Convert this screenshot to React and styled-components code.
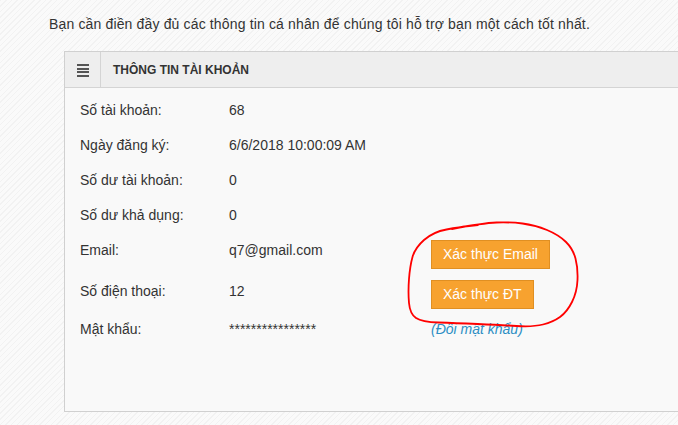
import React from "react";
import styled, { createGlobalStyle } from "styled-components";

const Global = createGlobalStyle`
  html, body {
    margin: 0;
    padding: 0;
    overflow: hidden;
  }
  body {
    font-family: "Liberation Sans", Arial, sans-serif;
    font-size: 14px;
    color: #333;
    background-color: #f7f7f7;
    background-image: repeating-linear-gradient(
      135deg,
      #f2f2f2 0px,
      #f2f2f2 1px,
      #fafafa 1px,
      #fafafa 4px
    );
  }
`;

const Page = styled.div`
  position: relative;
  width: 678px;
  height: 425px;
  padding: 15px 0 0 49px;
  box-sizing: border-box;
`;

const Intro = styled.p`
  margin: 0 0 18px 0;
  line-height: 18px;
  font-size: 14px;
  letter-spacing: 0.15px;
  color: #333;
  white-space: nowrap;
`;

const Panel = styled.section`
  margin-left: 15px;
  width: 680px;
  border: 1px solid #d0d0d0;
  background: #f9f9f9;
`;

const PanelHeader = styled.header`
  display: flex;
  align-items: stretch;
  height: 35px;
  background: #eeeeee;
  border-bottom: 1px solid #d4d4d4;
`;

const IconCell = styled.div`
  width: 35px;
  display: flex;
  align-items: center;
  justify-content: center;
  border-right: 1px solid #d4d4d4;
`;

const MenuIcon = styled.span`
  display: flex;
  flex-direction: column;
  gap: 1.4px;
  width: 12px;
  margin-left: 1px;
  margin-top: 2px;
  & > i {
    display: block;
    height: 2px;
    background: #555;
  }
`;

const Title = styled.h2`
  margin: 0;
  padding-left: 12px;
  display: flex;
  align-items: center;
  font-size: 12px;
  font-weight: bold;
  color: #333;
`;

const PanelBody = styled.div`
  height: 323px;
  padding: 4px 0 0 15px;
  box-sizing: border-box;
`;

const Row = styled.div`
  display: grid;
  grid-template-columns: 149px 202px auto;
  align-items: start;
  height: ${(p) => p.$h}px;
  padding-top: 9px;
  box-sizing: border-box;
`;

const Label = styled.span`
  line-height: 18px;
  color: #333;
`;

const Value = styled.span`
  line-height: 18px;
  color: #333;
`;

const Actions = styled.div`
  display: flex;
  margin-top: ${(p) => p.$offset || 0}px;
`;

const OrangeButton = styled.button`
  font-family: "Liberation Sans", Arial, sans-serif;
  font-size: 14px;
  line-height: 17px;
  color: #fff;
  background: #f7a22f;
  border: 1px solid #e08f22;
  padding: 5px 11px;
  border-radius: 0;
  cursor: pointer;
`;

const ChangeLink = styled.a`
  line-height: 18px;
  font-style: italic;
  color: #2d8fc4;
  text-decoration: none;
  cursor: pointer;
`;

const Annotation = styled.svg`
  position: absolute;
  left: 0;
  top: 0;
  pointer-events: none;
`;

const ringPoints = [
  [452, 229], [483, 223], [510, 222], [535, 225], [559, 235], [573, 249],
  [578, 268], [577, 292], [567, 312], [553, 322], [533, 327], [500, 325],
  [455, 323], [422, 322], [410, 314], [408, 292], [410, 266], [415, 248],
  [433, 232], [460, 227], [478, 225],
];

function smoothPath(pts) {
  const mid = (a, b) => [(a[0] + b[0]) / 2, (a[1] + b[1]) / 2];
  let d = `M${pts[0][0]},${pts[0][1]}`;
  for (let i = 1; i < pts.length - 1; i++) {
    const m = mid(pts[i], pts[i + 1]);
    d += ` Q${pts[i][0]},${pts[i][1]} ${m[0]},${m[1]}`;
  }
  const last = pts[pts.length - 1];
  d += ` L${last[0]},${last[1]}`;
  return d;
}

const rows = [
  { label: "Số tài khoản:", value: "68", h: 35 },
  { label: "Ngày đăng ký:", value: "6/6/2018 10:00:09 AM", h: 35 },
  { label: "Số dư tài khoản:", value: "0", h: 35 },
  { label: "Số dư khả dụng:", value: "0", h: 35 },
];

export default function App() {
  return (
    <>
      <Global />
      <Page>
        <Intro>
          Bạn cần điền đầy đủ các thông tin cá nhân để chúng tôi hỗ trợ bạn một cách tốt nhất.
        </Intro>
        <Panel>
          <PanelHeader>
            <IconCell>
              <MenuIcon>
                <i />
                <i />
                <i />
                <i />
              </MenuIcon>
            </IconCell>
            <Title>THÔNG TIN TÀI KHOẢN</Title>
          </PanelHeader>
          <PanelBody>
            {rows.map((r) => (
              <Row key={r.label} $h={r.h}>
                <Label>{r.label}</Label>
                <Value>{r.value}</Value>
              </Row>
            ))}
            <Row $h={41}>
              <Label>Email:</Label>
              <Value>q7@gmail.com</Value>
              <Actions $offset={-1}>
                <OrangeButton>Xác thực Email</OrangeButton>
              </Actions>
            </Row>
            <Row $h={38}>
              <Label>Số điện thoại:</Label>
              <Value>12</Value>
              <Actions $offset={-2}>
                <OrangeButton>Xác thực ĐT</OrangeButton>
              </Actions>
            </Row>
            <Row $h={40}>
              <Label>Mật khẩu:</Label>
              <Value>****************</Value>
              <ChangeLink>(Đổi mật khẩu)</ChangeLink>
            </Row>
          </PanelBody>
        </Panel>
        <Annotation width="678" height="425" viewBox="0 0 678 425">
          <path
            d={smoothPath(ringPoints)}
            fill="none"
            stroke="#ff0000"
            strokeWidth="1.8"
            strokeLinecap="round"
            strokeLinejoin="round"
          />
        </Annotation>
      </Page>
    </>
  );
}
